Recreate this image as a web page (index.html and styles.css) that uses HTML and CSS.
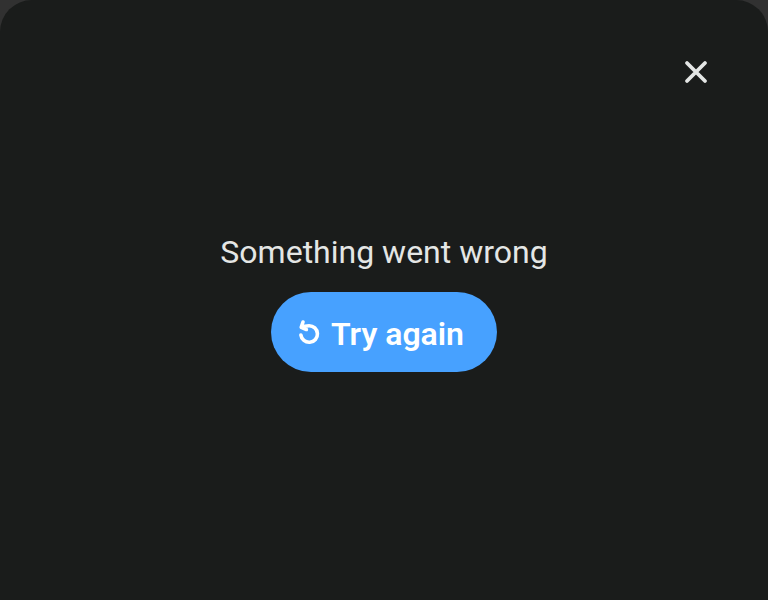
FILE: index.html
```html
<!DOCTYPE html>
<html lang="en">
<head>
<meta charset="utf-8">
<title>Error</title>
<link rel="stylesheet" href="styles.css">
</head>
<body>
<main class="sheet">
  <header class="sheet-header">
    <button class="close" aria-label="Close">
      <svg width="24" height="24" viewBox="0 0 24 24" fill="none" stroke="currentColor" stroke-width="3.8" stroke-linecap="round"><path d="M3 3 21 21M21 3 3 21"/></svg>
    </button>
  </header>
  <section class="error">
    <p class="message">Something went wrong</p>
    <button class="retry">
      <svg class="retry-icon" width="24" height="28" viewBox="0 0 24 28" fill="none" stroke="currentColor" stroke-width="3.6" stroke-linecap="round" stroke-linejoin="round"><path d="M3.9 17A8.3 8.3 0 1 0 12 7.7Q8 7.8 4.4 9.4M6 4 4.2 9.4 9.4 11.5"/></svg>
      <span>Try again</span>
    </button>
  </section>
</main>
</body>
</html>
```

FILE: styles.css
```css
* { box-sizing: border-box; }
body {
  margin: 0;
  height: 600px;
  overflow: hidden;
  background: #313131;
  font-family: Roboto, "Liberation Sans", sans-serif;
}
.sheet {
  height: 600px;
  background: #1a1c1b;
  border-radius: 32px 32px 0 0;
  color: #e4e6e5;
}
.sheet-header {
  display: flex;
  justify-content: flex-end;
  height: 232px;
  padding: 60px 60px 0;
}
button { border: 0; font: inherit; }
.close {
  width: 24px;
  height: 24px;
  padding: 0;
  background: none;
  color: #e4e6e5;
}
.close svg { display: block; }
.error {
  display: flex;
  flex-direction: column;
  align-items: center;
  gap: 20px;
}
.message {
  margin: 0;
  font-size: 32px;
  line-height: 40px;
}
.retry {
  display: flex;
  align-items: center;
  gap: 10px;
  width: 226px;
  height: 80px;
  padding: 4px 26px 0;
  border-radius: 40px;
  background: #47a1ff;
  color: #fff;
  font-size: 32px;
  font-weight: 600;
  line-height: 40px;
  white-space: nowrap;
}
.retry-icon { margin-bottom: 4px; }
```
